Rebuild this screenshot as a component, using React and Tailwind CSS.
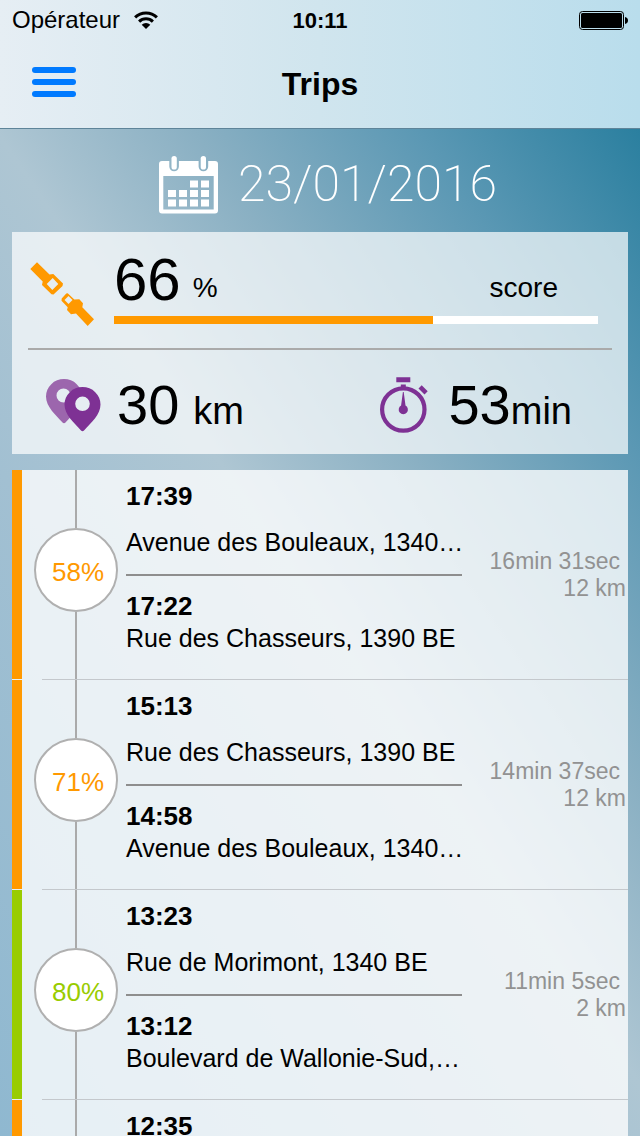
const SCORE = 66;

const TRIPS = [
    {
        id: 1,
        score: 58,
        level: 'medium',
        end: { time: '17:39', place: 'Avenue des Bouleaux, 1340…' },
        start: { time: '17:22', place: 'Rue des Chasseurs, 1390 BE' },
        duration: '16min 31sec',
        distance: '12 km',
    },
    {
        id: 2,
        score: 71,
        level: 'medium',
        end: { time: '15:13', place: 'Rue des Chasseurs, 1390 BE' },
        start: { time: '14:58', place: 'Avenue des Bouleaux, 1340…' },
        duration: '14min 37sec',
        distance: '12 km',
    },
    {
        id: 3,
        score: 80,
        level: 'good',
        end: { time: '13:23', place: 'Rue de Morimont, 1340 BE' },
        start: { time: '13:12', place: 'Boulevard de Wallonie-Sud,…' },
        duration: '11min 5sec',
        distance: '2 km',
    },
    // details not loaded yet
    { id: 4, level: 'medium', end: { time: '12:35' } },
];

const LEVELS = {
    medium: { bar: 'bg-[#ff9900]', text: 'text-[#ff9900]' },
    good: { bar: 'bg-[#99cc00]', text: 'text-[#99cc00]' },
};

function WifiIcon() {
    return (
        <svg viewBox="0 0 24 18" className="w-6 h-[18px]" aria-hidden="true">
            <g fill="none" stroke="#000" strokeWidth="3">
                <path d="M1.1 6.4a15.4 15.4 0 0 1 21.8 0" />
                <path d="M5.1 10.6a9.800 9.800 0 0 1 13.800 0" />
            </g>
            <path d="M12 18l-4.300-4.300a6 6 0 0 1 8.600 0z" />
        </svg>
    );
}

function BatteryIcon() {
    return (
        <svg viewBox="0 0 49 19" className="w-[49px] h-[19px]" aria-hidden="true">
            <rect x="0.5" y="0.5" width="44" height="18" rx="3" fill="none" stroke="#000" />
            <rect x="2" y="2" width="41" height="15" rx="1.5" />
            <path d="M46 6c2 0.5 3 1.8 3 3.5s-1 3-3 3.5z" />
        </svg>
    );
}

function CalendarIcon() {
    return (
        <svg viewBox="0 0 59 58" className="w-[59px] h-[58px]" fill="#fff" aria-hidden="true">
            <path
                fillRule="evenodd"
                d="M3 5h7.3v5.5a4.8 4.8 0 0 0 9.6 0V5h19.7v5.5a4.8 4.8 0 0 0 9.6 0V5H56a3 3 0 0 1 3 3v46.5a3 3 0 0 1-3 3H3a3 3 0 0 1-3-3V8a3 3 0 0 1 3-3zM4.3 20v33.5h50.4V20z"
            />
            <rect x="12.5" y="0" width="5.3" height="13.5" rx="2.6" />
            <rect x="41.7" y="0" width="5.3" height="13.5" rx="2.6" />
            <path d="M31 24.5h8v7h-8zM42 24.5h8v7h-8zM9 34h8v7H9zM20 34h8v7h-8zM31 34h8v7h-8zM42 34h8v7h-8zM9 43.5h8v7H9zM20 43.5h8v7h-8zM31 43.5h8v7h-8zM42 43.5h8v7h-8z" />
        </svg>
    );
}

function SeatBeltIcon() {
    return (
        <svg viewBox="0 0 64 64" className="w-16 h-16" fill="#ff9900" aria-hidden="true">
            <path
                fillRule="evenodd"
                d="M7 0.3L19.5 12.500 23.300 12 33 21.500 32.500 24 23.500 32.600 21.500 32.300 12 23 12.700 19.500 0.300 7zM22.700 16L16.700 22 22.300 28 28.300 22z"
            />
            <path
                fillRule="evenodd"
                d="M37.700 31.300L44.300 37.500 49.300 37.300 53 41.300 52.300 45.300 64 57.300 57.700 64 46 51.500 41 52.300 37 48 37.700 45.300 31.500 38.700 31.700 36.500 36.300 31.500zM38.500 34L34.500 38 38.500 42 42.500 38z"
            />
        </svg>
    );
}

function DistanceIcon() {
    return (
        <svg viewBox="0 0 55 53" className="w-[55px] h-[53px]" aria-hidden="true">
            <mask id="front-pin">
                <rect width="55" height="53" fill="#fff" />
                <circle cx="36.5" cy="24.8" r="12" fill="#000" />
            </mask>
            <path
                fill="#9c66ad"
                fillRule="evenodd"
                mask="url(#front-pin)"
                d="M18 0a18 17.500 0 0 1 18 17.500c0 10.500-10 18.500-16.500 26q-1.500 1.500-3 0C10 36 0 28 0 17.500A18 17.500 0 0 1 18 0zM17.500 9.500a7 7 0 1 0 0 14 7 7 0 1 0 0-14z"
            />
            <path
                fill="#7e3194"
                fillRule="evenodd"
                d="M36.500 8A18 17.500 0 0 1 54.500 25.500c0 10.500-9.500 18-16.500 26q-1.500 1.500-3 0C28 43.500 18.500 36 18.500 25.500A18 17.500 0 0 1 36.500 8zM36.500 17.500a7.300 7.300 0 1 0 0 14.600 7.300 7.300 0 1 0 0-14.600z"
            />
        </svg>
    );
}

function StopwatchIcon() {
    return (
        <svg viewBox="0 0 48 56" className="w-12 h-14" fill="#7e3194" aria-hidden="true">
            <path d="M16.3 0.3h14v5h-14zM20.8 7.500h5v3h-5z" />
            <path d="M41.7 8.300l6 6-3.200 3.200-6-6z" />
            <circle cx="23.3" cy="32.5" r="21.2" fill="none" stroke="#7e3194" strokeWidth="4.2" />
            <path d="M22.9 15h0.8l1.800 13.500a4.600 4.600 0 1 1-4.400 0z" />
        </svg>
    );
}

function Header() {
    return (
        <header className="h-[129px] border-b border-[#5e8499] bg-linear-to-r from-[#e6eef4] via-[#d0e5ee] to-[#b9ddec]">
            <div className="grid grid-cols-3 items-center h-10 pl-3 pr-3 text-[24px]">
                <div className="flex items-center gap-3.5">
                    <span>Opérateur</span>
                    <WifiIcon />
                </div>
                <span className="text-center font-bold text-[22px]">10:11</span>
                <div className="flex justify-end">
                    <BatteryIcon />
                </div>
            </div>
            <div className="grid grid-cols-3 items-center h-[88px] px-8">
                <button type="button" aria-label="Menu" className="flex flex-col gap-1.5 w-11 pb-1">
                    <span className="h-1.5 w-full rounded-full bg-[#007aff]" />
                    <span className="h-1.5 w-full rounded-full bg-[#007aff]" />
                    <span className="h-1.5 w-full rounded-full bg-[#007aff]" />
                </button>
                <h1 className="text-center text-[32px] font-bold">Trips</h1>
            </div>
        </header>
    );
}

function Summary() {
    return (
        <section className="mx-3 px-4 h-[222px] bg-white/70">
            <div className="flex gap-5 h-[116px] pt-5 pl-0.5 pr-[14px]">
                <div className="pt-2.5">
                    <SeatBeltIcon />
                </div>
                <div className="flex-1">
                    <div className="flex h-16">
                        <span className="text-[60px] leading-[56px]">{SCORE}</span>
                        <span className="ml-3 pt-5 text-[28px] leading-8">%</span>
                        <span className="ml-auto mr-10 pt-5 text-[28px] leading-8">score</span>
                    </div>
                    <div className="h-2 bg-white">
                        <div className="h-2 bg-[#ff9900]" style={{ width: `${SCORE}%` }} />
                    </div>
                </div>
            </div>
            <div className="h-0.5 bg-[#aaaaaa]" />
            <div className="flex items-center h-[104px] pt-1.5 pl-[18px]">
                <DistanceIcon />
                <div className="flex-1 pl-4">
                    <span className="text-[56px]">30</span>
                    <span className="ml-3.5 text-[38px]">km</span>
                </div>
                <StopwatchIcon />
                <div className="pl-5 pr-10">
                    <span className="text-[56px]">53</span>
                    <span className="text-[38px]">min</span>
                </div>
            </div>
        </section>
    );
}

function TripRow({ trip }) {
    const level = LEVELS[trip.level];

    return (
        <li className="flex h-[210px]">
            <div className={`w-2.5 mb-px ${level.bar}`} />
            <div className="w-5" />
            <div className="flex flex-1 min-w-0 border-b border-[#c4c8cc]">
                <div className="flex flex-col items-center w-[84px] -ml-2">
                    <div className="w-0.5 h-[58px] bg-[#aaaaaa]" />
                    {trip.score && (
                        <div className={`flex items-center justify-center w-[84px] h-[84px] pl-1 pt-1 rounded-full border-2 border-[#b0b0b0] bg-white text-[26px] ${level.text}`}>
                            {trip.score}%
                        </div>
                    )}
                    <div className="w-0.5 flex-1 bg-[#aaaaaa]" />
                </div>
                <div className="flex-1 min-w-0 ml-2 pt-3 text-[25px] leading-8 whitespace-nowrap">
                    <p className="text-[26px] font-bold leading-7">{trip.end.time}</p>
                    {trip.start && (
                        <>
                            <p className="mt-4">{trip.end.place}</p>
                            <div className="h-0.5 mt-4 mb-4 bg-[#8e8e8e]" />
                            <p className="text-[26px] font-bold leading-7">{trip.start.time}</p>
                            <p className="mt-0.5">{trip.start.place}</p>
                        </>
                    )}
                </div>
                <div className="w-[166px] pt-[78px] pr-0.5 text-right text-[23px] leading-[27px] text-[#929292]">
                    <p className="pr-1.5">{trip.duration}</p>
                    <p>{trip.distance}</p>
                </div>
            </div>
        </li>
    );
}

export default function App() {
    return (
        <div className="flex flex-col h-screen overflow-hidden font-['Liberation_Sans',Arial,sans-serif] text-black bg-[linear-gradient(236deg,#2a7f9f_6%,#5b98b4_22%,#8ab0c3_38%,#aec6d3_52%,#a2c0d2_68%,#8fb8d0_100%)]">
            <Header />
            <div className="flex items-center justify-center gap-5 h-[103px] pt-2 pl-4 text-white">
                <CalendarIcon />
                <time dateTime="2016-01-23" className="font-['Roboto',sans-serif] font-extralight text-[50px]">
                    23/01/2016
                </time>
            </div>
            <Summary />
            <ul className="flex-1 min-h-0 mx-3 mt-4 overflow-hidden bg-white/78">
                {TRIPS.map((trip) => (
                    <TripRow key={trip.id} trip={trip} />
                ))}
            </ul>
        </div>
    );
}
